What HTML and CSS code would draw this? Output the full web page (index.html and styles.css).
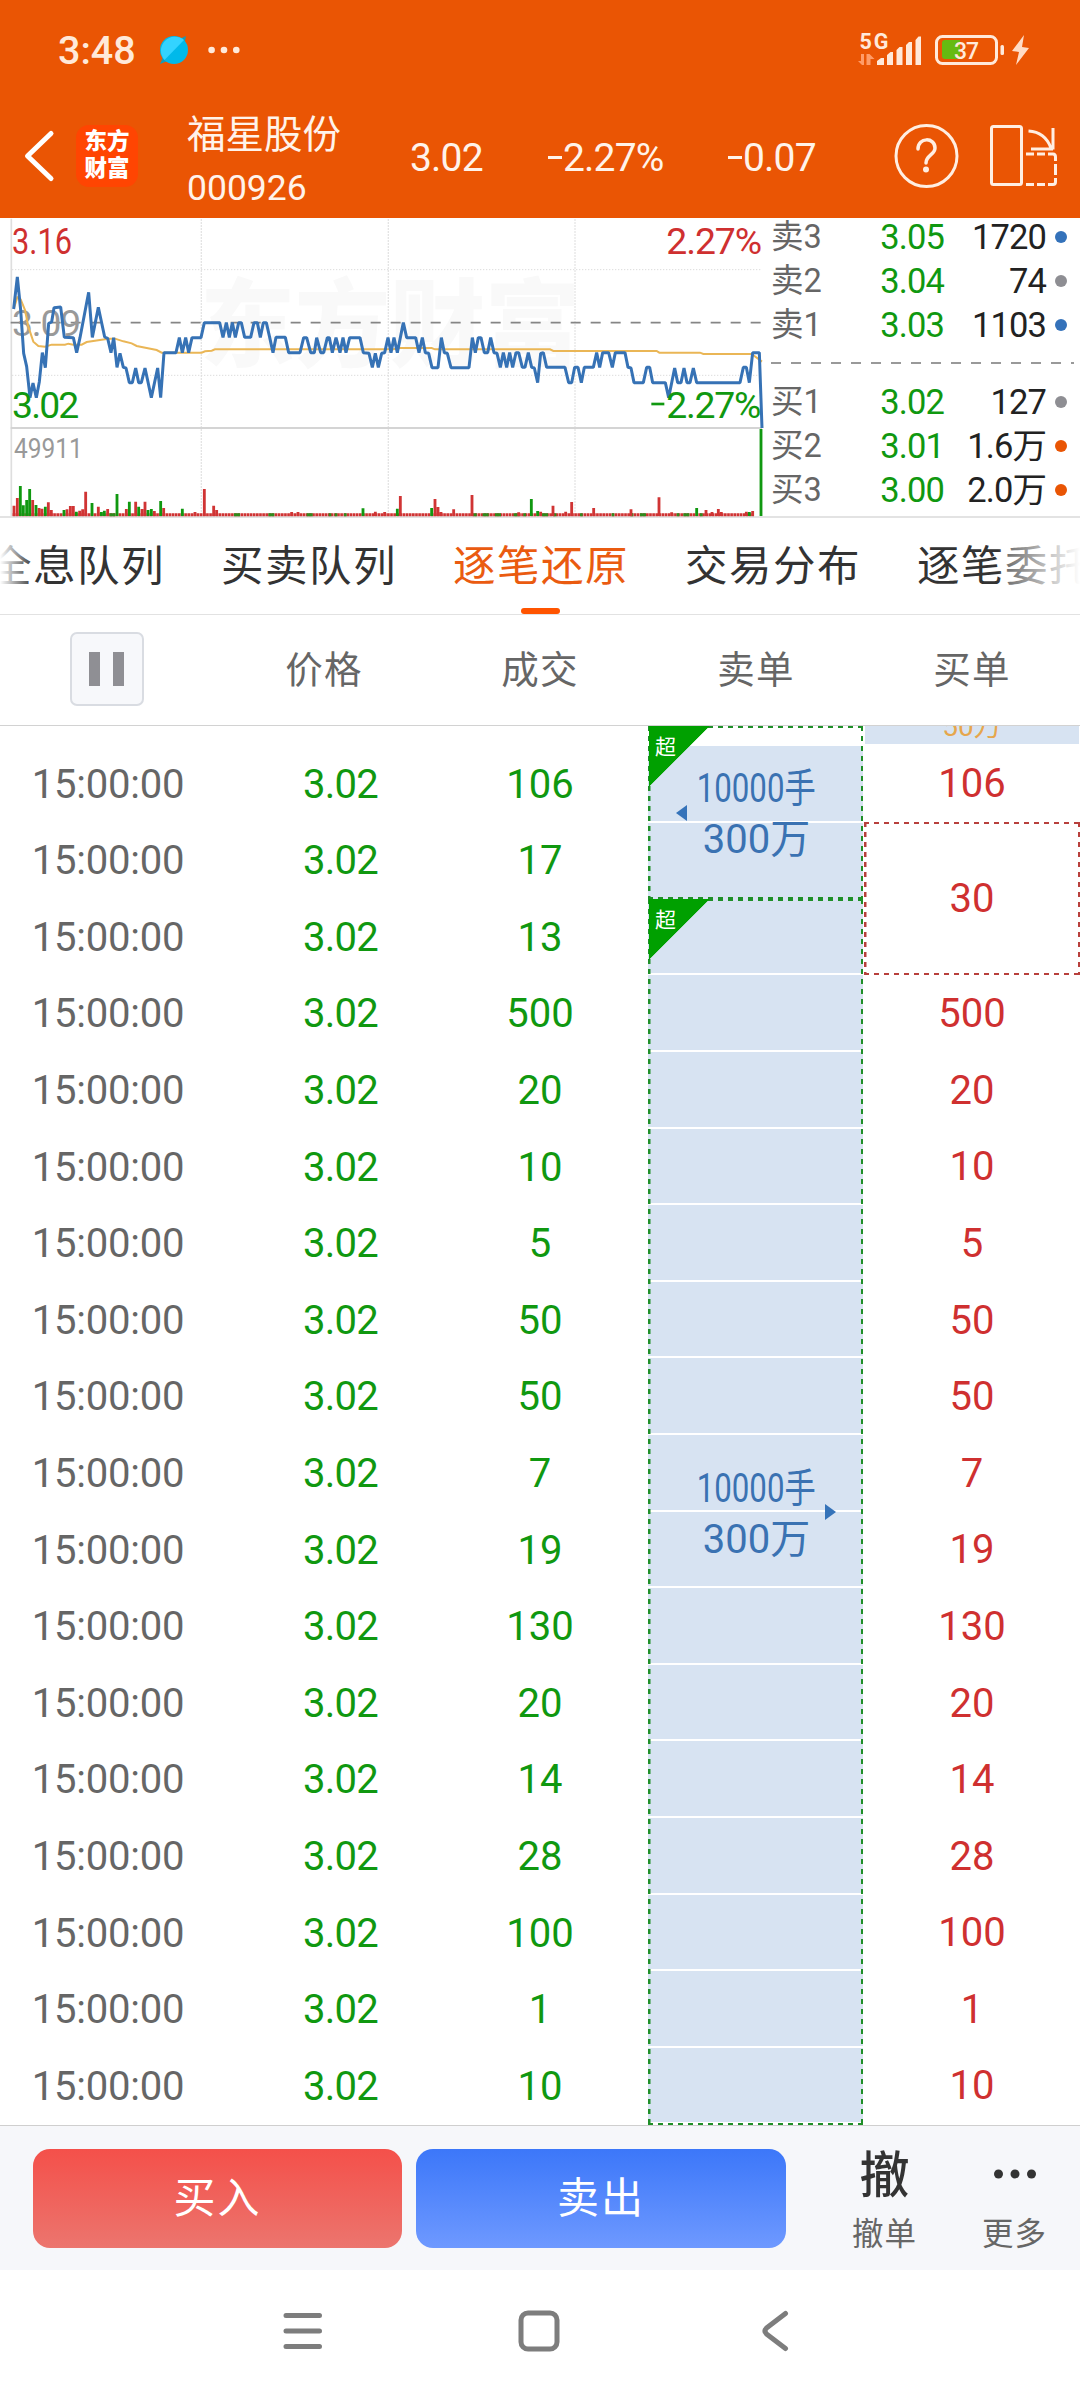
FILE: index.html
```html
<!DOCTYPE html>
<html lang="zh-CN">
<head>
<meta charset="utf-8">
<title>福星股份 000926</title>
<link rel="stylesheet" href="styles.css">
</head>
<body>
<div class="screen">
  <header class="top">
    <div class="status">
      <span class="clock">3:48</span>
      <svg class="status-left" width="90" height="40" viewBox="155 30 90 40">
        <path d="M160 64l4-9 6 5zM186 36l-9 4 7 6z" fill="#1a9ab0"/>
        <circle cx="174" cy="50" r="14" fill="#00b9ea"/>
        <path d="M164.500 60a14 14 0 0 1 19.500-20z" fill="#33d3ff"/>
        <g fill="#ffe9da"><circle cx="211.600" cy="50" r="3.300"/><circle cx="224" cy="50" r="3.300"/><circle cx="236.300" cy="50" r="3.300"/></g>
      </svg>
      <svg class="status-right" width="180" height="44" viewBox="855 28 180 44">
        <text x="859.500" y="48.500" class="net" textLength="29">5G</text>
        <g fill="#ff9c68"><path d="M864 54v11h-2l-4-4h3v-7zM866.500 65V54h3l5 5h-4v6z"/></g>
        <g fill="#ffe9da">
          <path d="M877 65v-4l4-3h3v7zM887 65V55l3.500-3h2.500v13zM896.500 65V50l3-3h3v18zM906 65V45l3-3h3v23zM915.500 65V40l3-3.500h2.500V65z"/>
          <rect x="1000.500" y="45" width="3.500" height="10" rx="1.500"/>
          <path d="M1024 35l-12 16 7 1-3 13 13-17-7-1z" fill="#ffdcc6"/>
        </g>
        <rect x="936.500" y="36.500" width="60" height="27" rx="6" fill="none" stroke="#ffe9da" stroke-width="3"/>
        <path d="M942 43q0-3 3-3h15v19h-15q-3 0-3-3z" fill="#66bb11"/>
        <text x="954" y="59" class="batt" textLength="25">37</text>
      </svg>
    </div>
    <div class="titlebar">
      <svg class="back" width="50" height="62" viewBox="12 125 50 62"><path d="M51 133.500L27.500 156L51 178.500" fill="none" stroke="#fff" stroke-width="5" stroke-linecap="round" stroke-linejoin="round"/></svg>
      <div class="logo"><span>东方</span><span>财富</span></div>
      <div class="stock"><div class="name">福星股份</div><div class="code">000926</div></div>
      <div class="quote q1">3.02</div>
      <div class="quote q2"><i></i>2.27%</div>
      <div class="quote q3"><i></i>0.07</div>
      <svg class="tools" width="166" height="66" viewBox="894 123 166 66" fill="none" stroke="#ffeee2" stroke-width="3">
        <circle cx="926.500" cy="156" r="30.500"/>
        <path d="M918 149c0-12 17-12 17-1 0 7-9 7-9 15" stroke-width="3.500" stroke-linecap="round"/>
        <circle cx="926" cy="169.500" r="3" fill="#ffeee2" stroke="none"/>
        <rect x="991.500" y="126.500" width="30" height="58" rx="2"/>
        <path d="M1028.500 131Q1045 132 1051 148M1053 128V149.500M1031 149H1053"/>
        <path d="M1026 154H1034M1037 154H1045M1048 154H1053Q1055.500 154 1055.500 157V161M1055.500 164V175M1055.500 178V182Q1055.500 184.500 1053 184.500H1048M1045 184.500H1037M1034 184.500H1026"/>
      </svg>
    </div>
  </header>

  <section class="market">
    <svg class="chart" width="765" height="300" viewBox="0 24 2295 900">
      <text x="600" y="446" class="mark" textLength="1140" lengthAdjust="spacingAndGlyphs">东方财富</text>
      <g fill="none" stroke="#dcdcdc" stroke-width="4" stroke-dasharray="4 5">
        <path d="M604 28V918M1165 28V918M1725 28V918"/>
        <path d="M36 179H2286M36 496H2286" stroke-width="3"/>
      </g>
      <path d="M34 26V918" stroke="#dedede" stroke-width="5"/>
      <path d="M32 654H2286" stroke="#d4d4d4" stroke-width="6"/>
      <path d="M32 338H2286" stroke="#858585" stroke-width="5" stroke-dasharray="30 30"/>
      <g class="axis">
        <text x="36" y="378" fill="#999" textLength="208">3.09</text>
      </g>
      <polyline fill="none" stroke="#eab656" stroke-width="6" points="41,297 52,262 62,268 75,300 85,350 100,395 115,408 135,410 155,404 195,404 205,401 220,404 245,404 260,396 300,390 325,386 345,386 370,394 395,400 410,408 440,414 470,420 485,428 605,428 615,424 635,422 645,418 1180,418 1200,414 1295,414 1305,418 1650,418 1660,423 1970,423 1978,428 2100,428 2110,432 2255,432 2286,455"/>
      <polyline fill="none" stroke="#3672b5" stroke-width="9" stroke-linejoin="bevel" points="41,297 52,201 62,300 71,430 80,470 90,563 99,519 109,563 118,515 127,428 136,473 146,340 155,336 162,293 182,291 193,382 220,383 230,428 240,383 266,247 277,382 295,292 314,381 323,385 333,428 341,383 351,472 360,430 370,472 378,474 388,518 397,518 407,474 416,518 424,518 435,474 454,563 473,474 482,563 492,428 528,428 538,383 547,428 557,383 566,428 576,383 603,383 613,338 659,338 669,382 679,338 688,382 697,338 706,382 716,338 724,338 734,382 752,382 762,338 772,338 781,382 790,338 799,338 809,382 819,428 828,382 856,382 866,428 900,428 911,383 920,383 932,428 943,428 950,383 962,428 971,428 982,383 988,383 997,428 1008,383 1020,428 1029,383 1038,428 1049,383 1080,383 1090,428 1107,430 1117,472 1126,430 1135,472 1145,430 1154,428 1164,383 1173,428 1182,383 1192,428 1210,338 1220,383 1247,383 1257,428 1267,383 1276,428 1286,430 1296,473 1314,473 1324,383 1333,428 1342,430 1353,473 1407,473 1417,383 1426,428 1435,383 1443,383 1453,428 1463,428 1472,383 1482,428 1491,430 1501,472 1510,428 1520,472 1529,428 1538,472 1548,428 1556,428 1567,472 1575,472 1585,428 1595,472 1603,474 1613,518 1622,430 1630,428 1640,472 1695,472 1706,518 1715,518 1724,472 1734,472 1744,518 1753,472 1780,472 1790,428 1799,472 1808,428 1826,428 1837,472 1846,428 1875,428 1884,472 1893,474 1902,518 1930,518 1940,472 1949,472 1958,518 1996,518 2006,563 2024,474 2033,518 2043,518 2052,474 2061,518 2070,518 2080,474 2090,518 2220,518 2230,472 2239,472 2248,518 2258,428 2278,428 2286,654"/>
      <g class="axis">
        <text x="36" y="131" fill="#cf3030" textLength="180" lengthAdjust="spacingAndGlyphs">3.16</text>
        <text x="36" y="623" fill="#109810" textLength="202">3.02</text>
        <text x="1999" y="131" fill="#cf3030" textLength="287">2.27%</text>
        <path d="M1954 582H1993" stroke="#109810" stroke-width="8"/>
        <text x="1999" y="623" fill="#109810" textLength="285">2.27%</text>
        <text x="42" y="743" class="vol" textLength="206" lengthAdjust="spacingAndGlyphs">49911</text>
      </g>
      <path d="M38 914H2262" stroke="#cf3333" stroke-width="9" stroke-dasharray="8 1.360"/>
      <path d="M328 914h18M702 914h18M805 914h18M920 914h18M986 914h8M1004 914h8M1032 914h8M1420 914h10M1448 914h18M1485 914h18M1541 914h18M1570 914h8M1626 914h18M1660 914h9M1740 914h8M1835 914h8M1890 914h10M1920 914h18M2030 914h8M2050 914h18M2100 914h8" stroke="#2e8b1c" stroke-width="9"/>
      <path fill="none" stroke="#d03434" stroke-width="8.500" d="M42 918V887M52 918V864M98 918V870M117 918V894M126 918V896M145 918V877M154 918V900M201 918V898M211 918V888M220 918V888M239 918V902M248 918V898M257 918V845M295 918V890M323 918V897M379 918V897M407 918V875M426 918V897M435 918V875M463 918V903M491 918V894M585 918V906M613 918V837M641 918V887M650 918V900M875 918V906M894 918V906M1126 918V905M1154 918V906M1201 918V858M1305 918V867M1314 918V891M1323 918V906M1361 918V898M1416 918V855M1556 918V907M1622 918V905M1659 918V887M1697 918V905M1715 918V876M1781 918V894M1893 918V898M1977 918V862M2015 918V907M2118 918V900M2136 918V906M2155 918V897M2164 918V906M2239 918V905M2258 918V903"/>
      <path fill="none" stroke="#109810" stroke-width="8.500" d="M61 918V828M70 918V886M80 918V870M89 918V837M108 918V885M136 918V890M192 918V900M229 918V905M276 918V879M304 918V906M313 918V902M351 918V852M388 918V875M416 918V890M444 918V900M454 918V897M482 918V873M547 918V896M1089 918V895M1192 918V896M1295 918V894M1594 918V867M1613 918V903M2090 918V894M2248 918V906M2283 918V657"/>
    </svg>
    <div class="book">
      <div class="lvl"><span>卖3</span><b>3.05</b><em>1720</em><i class="blue"></i></div>
      <div class="lvl"><span>卖2</span><b>3.04</b><em>74</em><i class="grey"></i></div>
      <div class="lvl"><span>卖1</span><b>3.03</b><em>1103</em><i class="blue"></i></div>
      <div class="divider"></div>
      <div class="lvl"><span>买1</span><b>3.02</b><em>127</em><i class="grey"></i></div>
      <div class="lvl"><span>买2</span><b>3.01</b><em>1.6万</em><i class="orange"></i></div>
      <div class="lvl"><span>买3</span><b>3.00</b><em>2.0万</em><i class="orange"></i></div>
    </div>
  </section>

  <nav class="tabs">
    <a>全息队列</a><a>买卖队列</a><a class="active">逐笔还原</a><a>交易分布</a><a>逐笔委托</a>
  </nav>

  <div class="thead">
    <div><button class="pause"><i></i><i></i></button></div>
    <div class="th">价格</div><div class="th">成交</div><div class="th">卖单</div><div class="th">买单</div>
  </div>

  <main class="ticks">
    <div class="col time">
      <div>15:00:00</div><div>15:00:00</div><div>15:00:00</div><div>15:00:00</div><div>15:00:00</div><div>15:00:00</div><div>15:00:00</div><div>15:00:00</div><div>15:00:00</div><div>15:00:00</div><div>15:00:00</div><div>15:00:00</div><div>15:00:00</div><div>15:00:00</div><div>15:00:00</div><div>15:00:00</div><div>15:00:00</div><div>15:00:00</div>
    </div>
    <div class="col price">
      <div>3.02</div><div>3.02</div><div>3.02</div><div>3.02</div><div>3.02</div><div>3.02</div><div>3.02</div><div>3.02</div><div>3.02</div><div>3.02</div><div>3.02</div><div>3.02</div><div>3.02</div><div>3.02</div><div>3.02</div><div>3.02</div><div>3.02</div><div>3.02</div>
    </div>
    <div class="col deal">
      <div>106</div><div>17</div><div>13</div><div>500</div><div>20</div><div>10</div><div>5</div><div>50</div><div>50</div><div>7</div><div>19</div><div>130</div><div>20</div><div>14</div><div>28</div><div>100</div><div>1</div><div>10</div>
    </div>
    <div class="sell">
      <div class="order first dashed">
        <span class="tag">超</span>
        <div class="slot"></div><div class="slot"></div>
        <div class="label l1"><span class="narrow">10000手</span><span>300万</span></div>
        <svg class="arrow a1" width="11" height="16" viewBox="0 0 11 16"><path d="M11 0v16L0 8z" fill="#3573b9"/></svg>
      </div>
      <div class="order dashed">
        <span class="tag">超</span>
        <div class="slot"></div><div class="slot"></div><div class="slot"></div><div class="slot"></div><div class="slot"></div><div class="slot"></div><div class="slot"></div><div class="slot"></div><div class="slot"></div><div class="slot"></div><div class="slot"></div><div class="slot"></div><div class="slot"></div><div class="slot"></div><div class="slot"></div><div class="slot"></div>
        <div class="label l2"><span class="narrow">10000手</span><span>300万</span></div>
        <svg class="arrow a2" width="11" height="16" viewBox="0 0 11 16"><path d="M0 0v16l11-8z" fill="#3573b9"/></svg>
      </div>
    </div>
    <div class="col buy">
      <div class="peek"><span>50万</span></div>
      <div>106</div><div class="double dashed">30</div><div>500</div><div>20</div><div>10</div><div>5</div><div>50</div><div>50</div><div>7</div><div>19</div><div>130</div><div>20</div><div>14</div><div>28</div><div>100</div><div>1</div><div>10</div>
    </div>
  </main>

  <footer class="trade">
    <button class="btn buy-btn">买入</button>
    <button class="btn sell-btn">卖出</button>
    <div class="act act1"><span class="glyph">撤</span><span>撤单</span></div>
    <div class="act act2"><svg class="glyph" width="50" height="50" viewBox="0 0 50 50" fill="#333"><circle cx="8.500" cy="25" r="4.500"/><circle cx="25" cy="25" r="4.500"/><circle cx="41.500" cy="25" r="4.500"/></svg><span>更多</span></div>
  </footer>

  <div class="sysnav">
    <svg width="44" height="44" viewBox="0 0 44 44"><path d="M5 6.500H38.500M5 22H38.500M5 37.500H38.500"/></svg>
    <svg width="44" height="44" viewBox="0 0 44 44"><rect x="4" y="4" width="36" height="36" rx="7"/></svg>
    <svg width="44" height="44" viewBox="0 0 44 44"><path d="M32.500 4.500L13.500 19Q10.500 22 13.500 25L32.500 39.500"/></svg>
  </div>
</div>
</body>
</html>
```
FILE: styles.css
```css
* { box-sizing: border-box; }
body { margin: 0; background: #fff; font-family: Roboto, "Noto Sans CJK SC", sans-serif; font-weight: 400; }
i, em, b { font-style: normal; font-weight: 400; }
button { border: 0; font: inherit; padding: 0; }
svg { display: block; flex: none; }
.screen { width: 1080px; height: 2400px; overflow: hidden; display: flex; flex-direction: column; }

/* status bar and title */
.top { height: 218px; flex: none; background: #ea5504; color: #fff3ea; }
.status { height: 100px; display: flex; align-items: center; padding-left: 58px; }
.clock { width: 97px; font-size: 39.500px; line-height: 46px; font-weight: 500; color: #ffe9da; padding-top: 2px; }
.status-right { margin-left: 610px; }
.net { font: 700 21.500px Roboto, sans-serif; fill: #ffe9da; }
.batt { font: 500 23px Roboto, sans-serif; fill: #ffe9da; }
.titlebar { height: 112px; display: flex; align-items: center; padding-left: 12px; }
.back { margin-right: 14px; }
.logo { width: 62px; height: 62px; border-radius: 13px; background: #ff4502; display: flex; flex-direction: column; justify-content: center; text-align: center; font-size: 22.500px; line-height: 27px; font-weight: 900; color: #fff; padding-bottom: 2px; }
.stock { width: 170px; margin-left: 49px; padding-top: 6px; }
.name { font-size: 38.500px; line-height: 54px; white-space: nowrap; }
.code { font-size: 35.500px; line-height: 46px; margin-top: 3px; }
.quote { font-size: 39px; line-height: 46px; letter-spacing: -.8px; white-space: nowrap; display: flex; align-items: center; margin-top: 3px; }
.quote i { width: 14px; height: 3px; background: #fff3ea; margin-right: 1px; }
.q1 { width: 138px; margin-left: 53px; }
.q2 { width: 180px; }
.q3 { width: 166px; }

/* chart and order book */
.market { height: 300px; flex: none; display: flex; border-bottom: 2px solid #e3e3e3; }
.chart { width: 765px; height: 300px; }
.axis text { font: 400 112px Roboto, sans-serif; }
.axis .vol { font-size: 84px; fill: #999; }
.mark { font: 900 288px "Noto Sans CJK SC", sans-serif; fill: #f9f9f9; }
.book { flex: 1; margin-top: -4px; padding-left: 6px; }
.lvl { height: 44px; display: grid; grid-template-columns: 80px 93px 102px 21px; align-items: center; white-space: nowrap; font-size: 34.500px; line-height: 44px; letter-spacing: -.9px; }
.lvl span { color: #666; font-size: 32.500px; letter-spacing: 0; }
.lvl b { color: #109810; text-align: right; padding-top: 1px; }
.lvl em { color: #222; text-align: right; padding-top: 1px; }
.lvl i { width: 12px; height: 12px; border-radius: 50%; justify-self: end; }
.blue { background: #3472ba; }
.grey { background: #8e8e93; }
.orange { background: #e95504; }
.divider { height: 33px; width: 303px; background: repeating-linear-gradient(90deg, #999 0 10px, transparent 10px 20px) 0 16px / 100% 2px no-repeat; }

/* tabs */
.tabs { position: relative; height: 97px; flex: none; display: flex; gap: 56px; margin: 0; overflow: hidden; border-bottom: 1px solid #e2e2e2; }
.tabs a { position: relative; flex: none; width: 176px; font-size: 42.500px; letter-spacing: 1.500px; line-height: 98px; color: #333; white-space: nowrap; }
.tabs a:first-child { margin-left: -11px; }
.tabs .active { color: #ea5b10; }
.tabs .active::after { content: ""; position: absolute; left: 68px; bottom: 0; width: 39px; height: 6px; border-radius: 3px; background: #ff5400; }
.tabs::before, .tabs::after { content: ""; position: absolute; z-index: 1; top: 0; height: 94px; }
.tabs::before { left: 0; width: 34px; background: linear-gradient(90deg, #fff, rgba(255,255,255,0)); }
.tabs::after { right: 0; width: 82px; background: linear-gradient(270deg, #fff, rgba(255,255,255,.3) 90%, rgba(255,255,255,0)); }

.thead { height: 111px; flex: none; display: grid; grid-template-columns: repeat(5, 216px); align-items: center; text-align: center; font-size: 37.500px; letter-spacing: 1.200px; color: #666; border-bottom: 1px solid #d2d2d2; }
.th { line-height: 50px; }
.pause { width: 74px; height: 74px; margin: -2px 0 0 -3px; border: 2px solid #d9dce2; border-radius: 7px; background: #f7f8fb; display: inline-flex; vertical-align: middle; align-items: center; justify-content: center; gap: 13px; }
.pause i { width: 11px; height: 34px; background: #8f8f94; }

/* tick table */
.ticks { height: 1400px; flex: none; display: grid; grid-template-columns: repeat(5, 216px); overflow: hidden; font-size: 40px; border-bottom: 1px solid #cfcfcf; }
.col { padding-top: 19.700px; }
.col > div { height: 76.600px; line-height: 78px; text-align: center; }
.time { color: #666; letter-spacing: -.2px; }
.price { color: #109810; letter-spacing: -.7px; padding-left: 33px; }
.deal { color: #109810; }
.buy { color: #cf3030; padding-top: 0; }
.buy .peek { height: 18px; margin: 0 1px 1.400px; background: #d7e3f2; color: #e6a64c; font-size: 28px; display: flex; justify-content: center; align-items: flex-end; overflow: hidden; }
.peek span { line-height: 30px; margin-bottom: 2px; }
.buy .double { --dash: #b8403c; height: 153.200px; line-height: 154px; }
.sell { width: 215px; }
.order { --dash: #1f8f28; position: relative; height: 1226.300px; }
.order.first { height: 172.900px; padding-top: 20px; }
.slot { height: 76.600px; background: #d7e3f2; border-bottom: 2px solid #fff; }
.first .slot:nth-child(3) { border-bottom-color: #d7e3f2; }
.dashed { position: relative; }
.dashed::after { content: ""; position: absolute; inset: 0; background:
  repeating-linear-gradient(90deg, var(--dash) 0 5px, transparent 5px 10px) 0 0 / 100% 2px no-repeat,
  repeating-linear-gradient(90deg, var(--dash) 0 5px, transparent 5px 10px) 0 100% / 100% 2px no-repeat,
  repeating-linear-gradient(180deg, var(--dash) 0 5px, transparent 5px 10px) 0 0 / 2.500px 100% no-repeat,
  repeating-linear-gradient(180deg, var(--dash) 0 5px, transparent 5px 10px) 100% 0 / 2.500px 100% no-repeat; }
.tag { position: absolute; z-index: 1; left: 1px; top: 0; width: 60px; height: 61px; padding: 8px 0 0 6px; font-size: 21px; line-height: 26px; color: #fff; background: linear-gradient(135deg, #00a000 50%, transparent 50.500%); }
.label { position: absolute; z-index: 1; left: 1px; width: 100%; display: flex; flex-direction: column; align-items: center; color: #3a72b2; line-height: 51px; white-space: nowrap; }
.narrow { transform: scaleX(.78); }
.l1 { top: 37px; }
.l2 { top: 564px; }
.arrow { position: absolute; z-index: 1; }
.a1 { left: 28px; top: 79px; }
.a2 { left: 177px; top: 605px; }

/* trade bar */
.trade { height: 144px; flex: none; background: #f6f7fa; display: flex; padding: 23px 0 0 33px; }
.btn { width: 369px; height: 99px; border-radius: 17px; margin-right: 14px; color: #fff; font-size: 42px; letter-spacing: 2px; line-height: 98px; }
.buy-btn { background: linear-gradient(#f4504a, #ec756e); }
.sell-btn { background: linear-gradient(#3c77f9, #6e99ff); width: 370px; }
.act { width: 65px; display: flex; flex-direction: column; align-items: center; font-size: 31.500px; line-height: 48px; letter-spacing: 1px; color: #666; white-space: nowrap; }
.act .glyph { height: 62px; line-height: 54px; font-size: 50px; font-weight: 500; color: #333; letter-spacing: 0; }
.act svg.glyph { height: 50px; margin-bottom: 12px; }
.act1 { margin-left: 52px; }
.act2 { margin-left: 65px; }

.sysnav { flex: 1; display: flex; justify-content: center; gap: 192px; padding: 39px 2px 0 0; }
.sysnav svg { fill: none; stroke: #7d7d7d; stroke-width: 5; stroke-linecap: round; stroke-linejoin: round; }
```
